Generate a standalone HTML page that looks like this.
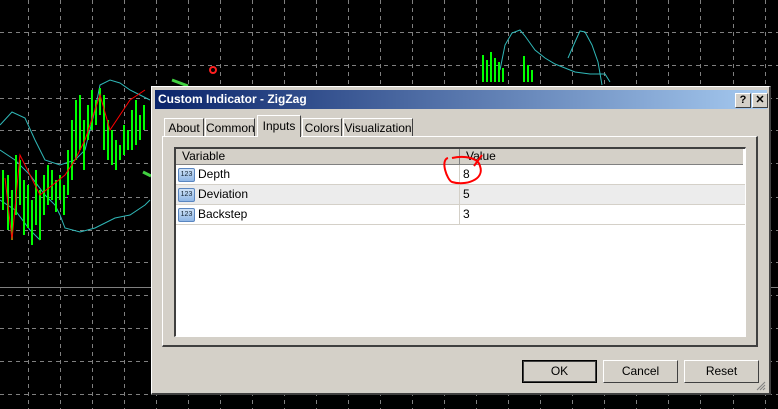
<!DOCTYPE html>
<html><head><style>
body{margin:0;width:778px;height:409px;background:#000;position:relative;overflow:hidden;font-family:"Liberation Sans",sans-serif;font-size:12px;color:#000}
.a{position:absolute}
.dlg{left:151px;top:86px;width:617px;height:306px;background:#d4d0c8;border-top:1px solid #fff;border-left:1px solid #fff;border-right:2px solid #404040;border-bottom:2px solid #404040}
.title{left:3px;top:3px;width:612px;height:19px;background:linear-gradient(to right,#0a246a,#a6caf0);color:#fff;font-weight:bold;font-size:12px;line-height:19px;text-indent:3px}
.tb{width:14px;height:13px;top:3px;background:#d4d0c8;border-top:1px solid #fff;border-left:1px solid #fff;border-right:1px solid #404040;border-bottom:1px solid #404040;color:#000;font-size:11px;line-height:13px;text-align:center;text-indent:0}
.tab{top:31px;height:18px;border-top:1px solid #fff;border-left:1px solid #fff;border-right:1px solid #404040;line-height:18px;text-align:center;background:#d4d0c8;box-sizing:border-box}
.btn{top:273px;width:73px;height:21px;border-top:1px solid #fff;border-left:1px solid #fff;border-right:1px solid #404040;border-bottom:1px solid #404040;text-align:center;line-height:21px}
.row{left:0;width:569px;height:19px;border-bottom:1px solid #d4d0c8;line-height:19px}
.ic{display:inline-block;width:15px;height:12px;background:linear-gradient(#cfe2f7,#8fb6e6);border:1px solid #5a86c0;border-radius:2px;font-size:7px;line-height:12px;text-align:center;color:#123;vertical-align:middle;margin:0 3px 0 2px}
</style></head><body>
<svg class="a" style="left:0;top:0" width="778" height="409">
<g stroke="#808080" stroke-dasharray="4,4" stroke-width="1">
<line x1="0" y1="32.5" x2="778" y2="32.5"/><line x1="0" y1="65.5" x2="778" y2="65.5"/><line x1="0" y1="98.5" x2="778" y2="98.5"/><line x1="0" y1="130.5" x2="778" y2="130.5"/><line x1="0" y1="163.5" x2="778" y2="163.5"/><line x1="0" y1="197.5" x2="778" y2="197.5"/><line x1="0" y1="230.5" x2="778" y2="230.5"/><line x1="0" y1="262.5" x2="778" y2="262.5"/><line x1="0" y1="295.5" x2="778" y2="295.5"/><line x1="0" y1="328.5" x2="778" y2="328.5"/><line x1="0" y1="361.5" x2="778" y2="361.5"/><line x1="0" y1="394.5" x2="778" y2="394.5"/>
<line x1="28.5" y1="0" x2="28.5" y2="409"/><line x1="60.5" y1="0" x2="60.5" y2="409"/><line x1="92.5" y1="0" x2="92.5" y2="409"/><line x1="124.5" y1="0" x2="124.5" y2="409"/><line x1="156.5" y1="0" x2="156.5" y2="409"/><line x1="188.5" y1="0" x2="188.5" y2="409"/><line x1="220.5" y1="0" x2="220.5" y2="409"/><line x1="252.5" y1="0" x2="252.5" y2="409"/><line x1="284.5" y1="0" x2="284.5" y2="409"/><line x1="316.5" y1="0" x2="316.5" y2="409"/><line x1="348.5" y1="0" x2="348.5" y2="409"/><line x1="380.5" y1="0" x2="380.5" y2="409"/><line x1="412.5" y1="0" x2="412.5" y2="409"/><line x1="444.5" y1="0" x2="444.5" y2="409"/><line x1="476.5" y1="0" x2="476.5" y2="409"/><line x1="508.5" y1="0" x2="508.5" y2="409"/><line x1="540.5" y1="0" x2="540.5" y2="409"/><line x1="572.5" y1="0" x2="572.5" y2="409"/><line x1="604.5" y1="0" x2="604.5" y2="409"/><line x1="636.5" y1="0" x2="636.5" y2="409"/><line x1="668.5" y1="0" x2="668.5" y2="409"/><line x1="700.5" y1="0" x2="700.5" y2="409"/><line x1="733.5" y1="0" x2="733.5" y2="409"/><line x1="765.5" y1="0" x2="765.5" y2="409"/>
</g>
<line x1="0" y1="287.5" x2="778" y2="287.5" stroke="#808080"/>
<g fill="none" stroke="#30b8b8" stroke-width="1">
<path d="M0,125 L12,112 L25,118 L35,140 L45,160 L60,165 L75,160 L85,150 L95,110 L100,85 L110,80 L120,83 L130,90 L140,95 L150,100"/>
<path d="M0,150 L15,160 L30,175 L45,195 L55,205 L60,215 L65,228 L80,232 L95,228 L115,218 L130,215 L145,205 L150,200"/>
<path d="M0,200 L15,210 L30,230 L40,240"/>
<path d="M500,70 L505,45 L512,33 L520,30 L525,36 L535,50 L545,58 L555,64 L565,68 L575,72 L590,74 L605,74 L610,82"/>
<path d="M568,58 L575,42 L580,31 L585,32 L592,45 L598,62 L602,85"/>
</g>
<g stroke="#00ff00" stroke-width="2">
<path d="M3,170V210 M8,175V230 M12,190V240 M16,155V215 M20,160V205 M24,180V235 M28,185V228 M32,200V245 M36,170V225 M40,190V240 M44,175V215 M48,165V205 M52,170V200 M56,180V212 M60,175V200 M64,185V215 M68,150V195 M72,120V180 M76,100V160 M80,95V150 M84,120V170 M88,105V140 M92,90V130 M96,100V125 M100,88V115 M104,95V150 M108,120V160 M112,130V165 M116,140V170 M120,145V160 M124,125V155 M128,130V150 M132,110V150 M136,100V145 M140,115V140 M144,105V130"/>
<path d="M483,55V82 M487,60V82 M491,52V82 M495,58V82 M499,62V82 M503,68V82 M524,56V82 M528,65V82 M532,70V82"/>
</g>
<path d="M5,178 L12,240 L20,155 L40,195 L65,175 L75,160 L85,140 L100,95 L110,130 L130,100 L145,90" fill="none" stroke="#ff0000"/>
<path d="M172,80 L188,86" stroke="#40d040" stroke-width="3"/>
<path d="M143,172 L151,176" stroke="#40d040" stroke-width="3"/>
<circle cx="213" cy="70" r="3" fill="none" stroke="#ff2020" stroke-width="2"/>
</svg>

<div class="a dlg">
<div class="a title">Custom Indicator - ZigZag
<div class="a tb" style="left:580px">?</div><div class="a tb" style="left:597px;font-weight:bold">✕</div>
</div>
<div class="a tab" style="left:12px;width:40px">About</div>
<div class="a tab" style="left:53px;width:50px">Common</div>
<div class="a tab" style="left:105px;width:44px;top:28px;height:22px;z-index:2;line-height:20px">Inputs</div>
<div class="a tab" style="left:150px;width:40px">Colors</div>
<div class="a tab" style="left:191px;width:70px">Visualization</div>
<div class="a" style="left:10px;top:49px;width:593px;height:208px;border-top:1px solid #fff;border-left:1px solid #fff;border-right:2px solid #404040;border-bottom:2px solid #404040"></div>
<div class="a" style="left:22px;top:60px;width:569px;height:187px;background:#fff;border-top:2px solid #404040;border-left:2px solid #404040;border-right:1px solid #fff;border-bottom:1px solid #fff">
 <div class="a" style="left:0;top:0;width:567px;height:15px;background:#d4d0c8;border-bottom:1px solid #808080;line-height:15px">
  <span class="a" style="left:6px">Variable</span><span class="a" style="left:283px;top:0;width:1px;height:15px;background:#808080"></span><span class="a" style="left:290px">Value</span>
 </div>
 <div class="row a" style="top:16px;background:#fff"><span class="ic">123</span>Depth<span class="a" style="left:283px;top:0;width:1px;height:20px;background:#d4d0c8"></span><span class="a" style="left:287px">8</span></div>
 <div class="row a" style="top:36px;background:#ececec"><span class="ic">123</span>Deviation<span class="a" style="left:283px;top:0;width:1px;height:20px;background:#d4d0c8"></span><span class="a" style="left:287px">5</span></div>
 <div class="row a" style="top:56px;background:#fff"><span class="ic">123</span>Backstep<span class="a" style="left:283px;top:0;width:1px;height:20px;background:#d4d0c8"></span><span class="a" style="left:287px">3</span></div>
</div>
<div class="a btn" style="left:370px;border:1px solid #000;outline:1px solid #404040;outline-offset:-2px">OK</div>
<div class="a btn" style="left:451px">Cancel</div>
<div class="a btn" style="left:532px">Reset</div>
</div>
<svg class="a" style="left:0;top:0" width="778" height="409">
<path d="M448,158 C440,160 447,180 452,182 C465,186 485,180 480,166 C478,158 465,155 452,158 M474,166 L482,155" fill="none" stroke="#ff0000" stroke-width="2"/>
<path d="M757,390 L765,382 M760,390 L765,385 M763,390 L765,388" stroke="#808080"/>
</svg>
</body></html>
